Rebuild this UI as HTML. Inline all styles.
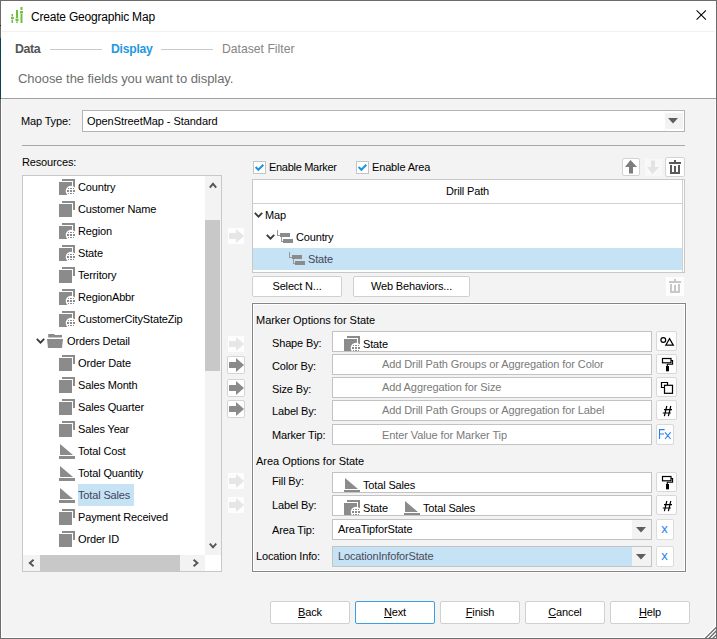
<!DOCTYPE html>
<html><head><meta charset="utf-8">
<style>
*{margin:0;padding:0;box-sizing:border-box}
html,body{width:717px;height:639px;overflow:hidden;background:#fff}
body{position:relative;font-family:"Liberation Sans",sans-serif;font-size:11px;color:#000}
.a{position:absolute}
.t{position:absolute;white-space:nowrap;line-height:13px;font-size:11px;letter-spacing:-0.15px}
.win{position:absolute;left:0;top:0;width:717px;height:639px;border:1px solid #6b6b6b;background:#fff}
.body{position:absolute;left:2px;top:99px;width:713px;height:538px;background:#f3f3f3}
.box{position:absolute;background:#fff;border:1px solid #c3c3c3}
.btn{position:absolute;background:#fff;border:1px solid #d0d0d0;border-radius:2px;text-align:center}
.ibtn{position:absolute;background:#fdfdfd;border:1px solid #d8d8d8;border-radius:2px}
.ph{color:#7a7a7a;letter-spacing:-0.1px}
svg{position:absolute;overflow:visible}
</style></head><body>
<svg width="0" height="0" style="position:absolute">
<defs>
<symbol id="dim" viewBox="0 0 16 16"><rect x="3" y="0" width="13" height="2" fill="#8b8b8b"/><rect x="14" y="0" width="2" height="9" fill="#8b8b8b"/><rect x="0" y="3" width="13" height="13" fill="#8b8b8b"/></symbol>
<symbol id="geo" viewBox="0 0 16 16"><rect x="3" y="0" width="13" height="2" fill="#8b8b8b"/><rect x="14" y="0" width="2" height="9" fill="#8b8b8b"/><rect x="0" y="3" width="13" height="13" fill="#8b8b8b"/><circle cx="12" cy="12" r="5.3" fill="#fff"/><g fill="#8b8b8b"><rect x="9" y="9" width="1" height="1"/><rect x="11" y="9" width="2" height="1"/><rect x="14" y="9" width="1" height="1"/><rect x="8" y="11" width="2" height="2"/><rect x="11" y="11" width="2" height="2"/><rect x="14" y="11" width="2" height="2"/><rect x="9" y="14" width="1" height="1"/><rect x="11" y="14" width="2" height="1"/><rect x="14" y="14" width="1" height="1"/></g></symbol>
<symbol id="mea" viewBox="0 0 16 16"><path d="M1 1 L1 12 L14 12 Z" fill="#8b8b8b"/><rect x="0" y="13" width="16" height="3" fill="#8b8b8b"/></symbol>
<symbol id="drl" viewBox="0 0 16 13"><rect x="0" y="0" width="1" height="6" fill="#9a9a9a"/><rect x="0" y="5" width="3" height="1" fill="#9a9a9a"/><rect x="3" y="3" width="10" height="4" fill="#8b8b8b"/><rect x="4" y="7" width="1" height="5" fill="#9a9a9a"/><rect x="4" y="11" width="2" height="1" fill="#9a9a9a"/><rect x="6" y="9" width="10" height="4" fill="#8b8b8b"/></symbol>
<symbol id="arr" viewBox="0 0 16 14"><path d="M1 4.5 Q1 4 1.5 4 L8 4 L8 0 L16 7 L8 14 L8 10 L1.5 10 Q1 10 1 9.5 Z"/></symbol>
<symbol id="chev" viewBox="0 0 9 6"><path d="M0.8 0.8 L4.5 4.6 L8.2 0.8" fill="none" stroke="#383838" stroke-width="1.8"/></symbol>
<symbol id="trash" viewBox="0 0 20 20"><rect x="9" y="3" width="2" height="2"/><rect x="4" y="5" width="12" height="2"/><rect x="5" y="8" width="2" height="9"/><rect x="9" y="9" width="2" height="8"/><rect x="13" y="8" width="2" height="9"/><rect x="5" y="15" width="10" height="2"/></symbol>
</defs></svg>

<div class="win"></div>
<div class="a" style="left:0;top:38px;width:1px;height:61px;background:#0b4450"></div>
<div class="a" style="left:0;top:25px;width:1px;height:1px;background:#222"></div>
<!-- header -->
<div class="a" style="left:2px;top:31px;width:713px;height:1px;background:#f1f1f1"></div>
<svg style="left:6px;top:4px" width="20" height="20" viewBox="0 0 20 20">
 <g fill="#70c040"><rect x="5.5" y="10" width="1.6" height="2.5"/><rect x="5" y="13" width="2.8" height="2"/><rect x="5.5" y="15.5" width="1.6" height="3.5"/>
 <rect x="10" y="6" width="2" height="8"/><rect x="9.5" y="14.5" width="3" height="2.5"/><rect x="10" y="17.5" width="2" height="1.2"/>
 <rect x="14.5" y="3" width="2" height="3"/><rect x="14" y="7" width="3" height="2.5"/><rect x="14.5" y="10" width="2" height="9"/></g>
</svg>
<div class="t" style="left:31px;top:11px;font-size:12px;letter-spacing:-0.2px">Create Geographic Map</div>
<svg style="left:696px;top:10px" width="11" height="10" viewBox="0 0 11 10"><path d="M0.6 0.3 L9.9 9.6 M9.9 0.3 L0.6 9.6" stroke="#000" stroke-width="1.05"/></svg>

<div class="t" style="left:15px;top:43px;font-size:12.4px;font-weight:bold;color:#555;letter-spacing:-0.4px">Data</div>
<div class="a" style="left:50px;top:49px;width:52px;height:1px;background:#c8c8c8"></div>
<div class="t" style="left:111px;top:43px;font-size:12.2px;font-weight:bold;color:#1f98e0;letter-spacing:-0.25px">Display</div>
<div class="a" style="left:161px;top:49px;width:52px;height:1px;background:#c8c8c8"></div>
<div class="t" style="left:222px;top:43px;font-size:12.2px;color:#858585;letter-spacing:0">Dataset Filter</div>
<div class="t" style="left:18px;top:71px;font-size:13px;line-height:15px;color:#6e6e6e;letter-spacing:-0.05px">Choose the fields you want to display.</div>
<div class="a" style="left:1px;top:98px;width:715px;height:1px;background:#a0a0a0"></div>

<div class="body"></div>

<div class="t" style="left:21px;top:115px">Map Type:</div>
<div class="box" style="left:82px;top:110px;width:603px;height:22px;border-color:#b4b4b4"></div>
<div class="t" style="left:87px;top:115px;letter-spacing:-0.06px">OpenStreetMap - Standard</div>
<div class="a" style="left:665px;top:111px;width:1px;height:20px;background:#f4f4f4"></div><div class="a" style="left:666px;top:113px;width:17px;height:16px;background:#f2f2f2"></div>
<svg style="left:668px;top:118px" width="10" height="6" viewBox="0 0 10 6"><path d="M0 0 L10 0 L5 5.5 Z" fill="#5e5e5e"/></svg>
<div class="a" style="left:22px;top:145px;width:663px;height:1px;background:#a8a8a8"></div>

<div class="t" style="left:22px;top:156px">Resources:</div>


<!-- resources list -->
<div class="box" style="left:22px;top:175px;width:200px;height:397px;border-color:#c8c8c8"></div>
<svg style="left:59px;top:179px" width="16" height="16"><use href="#geo"/></svg>
<div class="t" style="left:78px;top:181px">Country</div>
<svg style="left:59px;top:201px" width="16" height="16"><use href="#dim"/></svg>
<div class="t" style="left:78px;top:203px">Customer Name</div>
<svg style="left:59px;top:223px" width="16" height="16"><use href="#geo"/></svg>
<div class="t" style="left:78px;top:225px">Region</div>
<svg style="left:59px;top:245px" width="16" height="16"><use href="#geo"/></svg>
<div class="t" style="left:78px;top:247px">State</div>
<svg style="left:59px;top:267px" width="16" height="16"><use href="#dim"/></svg>
<div class="t" style="left:78px;top:269px">Territory</div>
<svg style="left:59px;top:289px" width="16" height="16"><use href="#geo"/></svg>
<div class="t" style="left:78px;top:291px">RegionAbbr</div>
<svg style="left:59px;top:311px" width="16" height="16"><use href="#geo"/></svg>
<div class="t" style="left:78px;top:313px">CustomerCityStateZip</div>
<svg style="left:36px;top:338px" width="9" height="6" viewBox="0 0 9 6"><use href="#chev"/></svg>
<svg style="left:47px;top:334px" width="16" height="14" viewBox="0 0 16 14"><path d="M1.2 0 L7 0 L8 1 L15 1 L15 3.5 L1.2 3.5 Z" fill="#8b8b8b"/><path d="M0 5 L16 5 L15 14 L1 14 Z" fill="#8b8b8b"/></svg>
<div class="t" style="left:67px;top:335px">Orders Detail</div>
<svg style="left:59px;top:355px" width="16" height="16"><use href="#dim"/></svg>
<div class="t" style="left:78px;top:357px">Order Date</div>
<svg style="left:59px;top:377px" width="16" height="16"><use href="#dim"/></svg>
<div class="t" style="left:78px;top:379px">Sales Month</div>
<svg style="left:59px;top:399px" width="16" height="16"><use href="#dim"/></svg>
<div class="t" style="left:78px;top:401px">Sales Quarter</div>
<svg style="left:59px;top:421px" width="16" height="16"><use href="#dim"/></svg>
<div class="t" style="left:78px;top:423px">Sales Year</div>
<svg style="left:59px;top:443px" width="16" height="16"><use href="#mea"/></svg>
<div class="t" style="left:78px;top:445px">Total Cost</div>
<svg style="left:59px;top:465px" width="16" height="16"><use href="#mea"/></svg>
<div class="t" style="left:78px;top:467px">Total Quantity</div>
<svg style="left:59px;top:487px" width="16" height="16"><use href="#mea"/></svg>
<div class="a" style="left:78px;top:484px;width:56px;height:22px;background:#c5e3f5"></div>
<div class="t" style="left:78px;top:489px;color:#44445a">Total Sales</div>
<svg style="left:59px;top:509px" width="16" height="16"><use href="#dim"/></svg>
<div class="t" style="left:78px;top:511px">Payment Received</div>
<svg style="left:59px;top:531px" width="16" height="16"><use href="#dim"/></svg>
<div class="t" style="left:78px;top:533px">Order ID</div>
<div class="a" style="left:205px;top:176px;width:16px;height:379px;background:#f3f3f3"></div>
<div class="a" style="left:205px;top:220px;width:15px;height:151px;background:#c8c8c8"></div>
<svg style="left:209px;top:182px" width="8" height="7" viewBox="0 0 8 7"><path d="M0.8 5.6 L4 1.8 L7.2 5.6" fill="none" stroke="#555" stroke-width="1.9"/></svg>
<svg style="left:209px;top:543px" width="8" height="7" viewBox="0 0 8 7"><path d="M0.8 0.6 L4 4.4 L7.2 0.6" fill="none" stroke="#555" stroke-width="1.9"/></svg>
<div class="a" style="left:23px;top:555px;width:182px;height:16px;background:#f3f3f3"></div>
<div class="a" style="left:40px;top:555px;width:140px;height:16px;background:#c8c8c8"></div>
<svg style="left:28px;top:559px" width="7" height="8" viewBox="0 0 7 8"><path d="M5.6 0.8 L1.8 4 L5.6 7.2" fill="none" stroke="#555" stroke-width="1.9"/></svg>
<svg style="left:193px;top:559px" width="7" height="8" viewBox="0 0 7 8"><path d="M0.6 0.8 L4.4 4 L0.6 7.2" fill="none" stroke="#555" stroke-width="1.9"/></svg>

<!-- transfer arrows -->
<div class="a" style="left:228px;top:228px;width:16px;height:16px;background:#fdfdfd"></div>
<svg style="left:228px;top:229px" width="16" height="14" fill="#e6e6e6"><use href="#arr"/></svg>
<div class="a" style="left:228px;top:336px;width:16px;height:16px;background:#fdfdfd"></div>
<svg style="left:228px;top:337px" width="16" height="14" fill="#e6e6e6"><use href="#arr"/></svg>
<div class="btn" style="left:227px;top:356px;width:18px;height:18px;border-color:#d4d4d4"></div>
<svg style="left:228px;top:358px" width="16" height="14" fill="#8a8a8a"><use href="#arr"/></svg>
<div class="btn" style="left:227px;top:379px;width:18px;height:18px;border-color:#d4d4d4"></div>
<svg style="left:228px;top:381px" width="16" height="14" fill="#8a8a8a"><use href="#arr"/></svg>
<div class="btn" style="left:227px;top:400px;width:18px;height:18px;border-color:#d4d4d4"></div>
<svg style="left:228px;top:402px" width="16" height="14" fill="#8a8a8a"><use href="#arr"/></svg>
<div class="a" style="left:228px;top:473px;width:16px;height:16px;background:#fdfdfd"></div>
<svg style="left:228px;top:474px" width="16" height="14" fill="#e6e6e6"><use href="#arr"/></svg>
<div class="a" style="left:228px;top:497px;width:16px;height:16px;background:#fdfdfd"></div>
<svg style="left:228px;top:498px" width="16" height="14" fill="#e6e6e6"><use href="#arr"/></svg>

<!-- checkboxes -->
<div class="box" style="left:253px;top:161px;width:13px;height:13px;border-color:#c4c4c4"></div>
<svg style="left:253px;top:161px" width="13" height="13" viewBox="0 0 13 13"><path d="M2.6 6 L5.4 8.8 L10.3 3.7" fill="none" stroke="#1b95dd" stroke-width="2"/></svg>
<div class="t" style="left:269px;top:161px;letter-spacing:-0.3px">Enable Marker</div>
<div class="box" style="left:356px;top:161px;width:13px;height:13px;border-color:#c4c4c4"></div>
<svg style="left:356px;top:161px" width="13" height="13" viewBox="0 0 13 13"><path d="M2.6 6 L5.4 8.8 L10.3 3.7" fill="none" stroke="#1b95dd" stroke-width="2"/></svg>
<div class="t" style="left:372px;top:161px">Enable Area</div>

<!-- up/down/trash -->
<div class="btn" style="left:622px;top:158px;width:18px;height:18px;border-color:#d4d4d4"></div>
<svg style="left:624px;top:160px" width="14" height="14" viewBox="0 0 14 14"><path d="M6.5 0 L13 7 L9 7 L9 13.5 L5 13.5 L5 7 L1 7 Z" fill="#7d7d7d"/></svg>
<div class="a" style="left:645px;top:159px;width:17px;height:17px;background:#f8f8f8"></div>
<svg style="left:646px;top:160px" width="14" height="14" viewBox="0 0 14 14"><path d="M6.5 14 L13 7 L9 7 L9 0.5 L5 0.5 L5 7 L1 7 Z" fill="#e3e3e3"/></svg>
<div class="btn" style="left:665px;top:157px;width:20px;height:20px;border-color:#d4d4d4"></div>
<svg style="left:665px;top:157px" width="20" height="20" viewBox="0 0 20 20"><use href="#trash" fill="#5a5a5a"/></svg>

<!-- drill table -->
<div class="box" style="left:252px;top:179px;width:433px;height:94px;border-color:#c8c8c8"></div>
<div class="a" style="left:253px;top:203px;width:430px;height:1px;background:#d0d0d0"></div>
<div class="a" style="left:682px;top:180px;width:1px;height:92px;background:#d0d0d0"></div>
<div class="t" style="left:253px;top:185px;width:429px;text-align:center">Drill Path</div>
<svg style="left:254px;top:212px" width="9" height="6" viewBox="0 0 9 6"><use href="#chev"/></svg>
<div class="t" style="left:265px;top:209px">Map</div>
<svg style="left:266px;top:234px" width="9" height="6" viewBox="0 0 9 6"><use href="#chev"/></svg>
<svg style="left:277px;top:230px" width="16" height="13"><use href="#drl"/></svg>
<div class="t" style="left:296px;top:231px">Country</div>
<div class="a" style="left:253px;top:248px;width:429px;height:22px;background:#c5e3f5"></div>
<svg style="left:289px;top:252px" width="16" height="13"><use href="#drl"/></svg>
<div class="t" style="left:308px;top:253px;color:#44445a">State</div>

<div class="a" style="left:666px;top:277px;width:18px;height:19px;background:#fdfdfd"></div>
<svg style="left:665px;top:276px" width="20" height="20" viewBox="0 0 20 20"><use href="#trash" fill="#c8c8c8"/></svg>

<div class="btn" style="left:252px;top:276px;width:90px;height:21px"></div>
<div class="t" style="left:252px;top:280px;width:90px;text-align:center">Select N...</div>
<div class="btn" style="left:353px;top:276px;width:117px;height:21px"></div>
<div class="t" style="left:353px;top:280px;width:117px;text-align:center">Web Behaviors...</div>


<!-- group box -->
<div class="a" style="left:252px;top:303px;width:434px;height:269px;border:1px solid #858585;box-shadow:inset 0 0 0 1px #fff,0 0 0 1px #fbfbfb"></div>
<div class="t" style="left:256px;top:314px;letter-spacing:-0.03px">Marker Options for State</div>
<div class="t" style="left:272px;top:337px">Shape By:</div>
<div class="t" style="left:272px;top:360px">Color By:</div>
<div class="t" style="left:272px;top:383px">Size By:</div>
<div class="t" style="left:272px;top:405px">Label By:</div>
<div class="t" style="left:272px;top:429px">Marker Tip:</div>
<div class="box" style="left:332px;top:331px;width:320px;height:21px;border-color:#c3c3c3"></div><div class="box" style="left:332px;top:354px;width:320px;height:21px;border-color:#c3c3c3"></div><div class="box" style="left:332px;top:377px;width:320px;height:21px;border-color:#c3c3c3"></div><div class="box" style="left:332px;top:400px;width:320px;height:21px;border-color:#c3c3c3"></div><div class="box" style="left:332px;top:424px;width:320px;height:21px;border-color:#c3c3c3"></div>
<div class="a" style="left:333px;top:332px;width:318px;height:19px;overflow:hidden">
 <svg style="left:11px;top:4px" width="16" height="16"><use href="#geo"/></svg>
 <div class="t" style="left:30px;top:6px">State</div>
</div>
<div class="t ph" style="left:382px;top:358px">Add Drill Path Groups or Aggregation for Color</div>
<div class="t ph" style="left:382px;top:381px">Add Aggregation for Size</div>
<div class="t ph" style="left:382px;top:404px">Add Drill Path Groups or Aggregation for Label</div>
<div class="t ph" style="left:382px;top:429px">Enter Value for Marker Tip</div>
<div class="ibtn" style="left:656px;top:331px;width:21px;height:20px"></div><div class="ibtn" style="left:656px;top:354px;width:21px;height:20px"></div><div class="ibtn" style="left:656px;top:377px;width:21px;height:20px"></div><div class="ibtn" style="left:656px;top:400px;width:21px;height:20px"></div><div class="ibtn" style="left:656px;top:424px;width:18px;height:21px"></div>
<svg style="left:657px;top:331px" width="20" height="20" viewBox="0 0 20 20"><circle cx="6.3" cy="9" r="2.4" fill="none" stroke="#000" stroke-width="1.2"/><path d="M12.5 7.6 L16.3 14.2 L8.8 14.2 Z" fill="none" stroke="#000" stroke-width="1.2"/></svg>
<svg style="left:657px;top:354px" width="20" height="20" viewBox="0 0 20 20"><rect x="5.5" y="4.5" width="8.5" height="4.3" fill="none" stroke="#000" stroke-width="1.2"/><path d="M14 6.5 L15.6 6.5 L15.6 10.2 L10.3 10.2 L10.3 12" fill="none" stroke="#000" stroke-width="1.1"/><rect x="9" y="12" width="3" height="5.3" fill="#000"/></svg>
<svg style="left:657px;top:377px" width="20" height="20" viewBox="0 0 20 20"><path d="M7.5 10.5 L4.5 10.5 L4.5 5.5 L10.5 5.5 L10.5 8" fill="none" stroke="#000" stroke-width="1.2"/><rect x="7.5" y="8.3" width="8" height="8" fill="none" stroke="#000" stroke-width="1.2"/></svg>
<svg style="left:657px;top:400px" width="20" height="20" viewBox="0 0 20 20"><path d="M9.8 6 L7.4 16.2 M13.8 6 L11.4 16.2 M7 9.6 L15 9.6 M5.8 13 L13.8 13" stroke="#000" stroke-width="1.2" fill="none"/></svg>
<svg style="left:656px;top:424px" width="18" height="21" viewBox="0 0 18 21"><path d="M3.5 15 L3.5 5.6 L8.6 5.6 M3.5 10 L8 10 M9 8.3 L14.6 15 M14.6 8.3 L9 15" stroke="#2a80ee" stroke-width="1.1" fill="none"/></svg>

<div class="t" style="left:256px;top:455px;letter-spacing:-0.03px">Area Options for State</div>
<div class="t" style="left:272px;top:475px">Fill By:</div>
<div class="t" style="left:272px;top:499px">Label By:</div>
<div class="t" style="left:272px;top:524px">Area Tip:</div>
<div class="t" style="left:256px;top:550px">Location Info:</div>
<div class="box" style="left:332px;top:472px;width:320px;height:21px;border-color:#c3c3c3"></div><div class="box" style="left:332px;top:495px;width:320px;height:21px;border-color:#c3c3c3"></div><div class="box" style="left:332px;top:519px;width:320px;height:21px;border-color:#c3c3c3"></div><div class="box" style="left:332px;top:546px;width:320px;height:21px;border-color:#c3c3c3"></div>
<div class="a" style="left:333px;top:473px;width:318px;height:19px;overflow:hidden">
 <svg style="left:11px;top:4px" width="16" height="16"><use href="#mea"/></svg>
 <div class="t" style="left:30px;top:6px">Total Sales</div>
</div>
<div class="a" style="left:333px;top:496px;width:318px;height:19px;overflow:hidden">
 <svg style="left:11px;top:4px" width="16" height="16"><use href="#geo"/></svg>
 <div class="t" style="left:30px;top:6px">State</div>
 <svg style="left:71px;top:4px" width="16" height="16"><use href="#mea"/></svg>
 <div class="t" style="left:90px;top:6px">Total Sales</div>
</div>
<div class="t" style="left:338px;top:523px">AreaTipforState</div>
<div class="a" style="left:632px;top:520px;width:19px;height:19px;background:#f3f3f3"></div>
<svg style="left:636px;top:527px" width="10" height="6" viewBox="0 0 10 6"><path d="M0 0 L10 0 L5 5.5 Z" fill="#5e5e5e"/></svg>
<div class="a" style="left:333px;top:547px;width:299px;height:19px;background:#c5e3f5"></div>
<div class="t" style="left:338px;top:550px;color:#4a4a5a">LocationInfoforState</div>
<div class="a" style="left:632px;top:547px;width:19px;height:19px;background:#f3f3f3"></div>
<svg style="left:636px;top:554px" width="10" height="6" viewBox="0 0 10 6"><path d="M0 0 L10 0 L5 5.5 Z" fill="#5e5e5e"/></svg>
<div class="ibtn" style="left:656px;top:472px;width:21px;height:20px"></div><div class="ibtn" style="left:656px;top:495px;width:21px;height:20px"></div>
<svg style="left:657px;top:472px" width="20" height="20" viewBox="0 0 20 20"><rect x="5.5" y="4.5" width="8.5" height="4.3" fill="none" stroke="#000" stroke-width="1.2"/><path d="M14 6.5 L15.6 6.5 L15.6 10.2 L10.3 10.2 L10.3 12" fill="none" stroke="#000" stroke-width="1.1"/><rect x="9" y="12" width="3" height="5.3" fill="#000"/></svg>
<svg style="left:657px;top:495px" width="20" height="20" viewBox="0 0 20 20"><path d="M9.8 6 L7.4 16.2 M13.8 6 L11.4 16.2 M7 9.6 L15 9.6 M5.8 13 L13.8 13" stroke="#000" stroke-width="1.2" fill="none"/></svg>
<div class="btn" style="left:656px;top:519px;width:18px;height:21px;border-color:#dcdcdc"></div>
<div class="t" style="left:656px;top:522px;width:18px;text-align:center;font-size:13px;color:#1f7ff0;text-indent:-1px">x</div>
<div class="btn" style="left:656px;top:546px;width:18px;height:21px;border-color:#dcdcdc"></div>
<div class="t" style="left:656px;top:549px;width:18px;text-align:center;font-size:13px;color:#1f7ff0;text-indent:-1px">x</div>

<!-- bottom buttons -->
<div class="btn" style="left:270px;top:601px;width:80px;height:23px"></div>
<div class="t" style="left:270px;top:606px;width:80px;text-align:center"><u>B</u>ack</div>
<div class="btn" style="left:355px;top:601px;width:80px;height:23px;border-color:#3c9ee0"></div>
<div class="t" style="left:355px;top:606px;width:80px;text-align:center"><u>N</u>ext</div>
<div class="btn" style="left:440px;top:601px;width:80px;height:23px"></div>
<div class="t" style="left:440px;top:606px;width:80px;text-align:center"><u>F</u>inish</div>
<div class="btn" style="left:525px;top:601px;width:80px;height:23px"></div>
<div class="t" style="left:525px;top:606px;width:80px;text-align:center"><u>C</u>ancel</div>
<div class="btn" style="left:610px;top:601px;width:80px;height:23px"></div>
<div class="t" style="left:610px;top:606px;width:80px;text-align:center"><u>H</u>elp</div>
<svg style="left:700px;top:622px;overflow:hidden" width="16" height="16" viewBox="0 0 16 16"><path d="M20.4 0 L16 0 L16 16 L4.4 16 Z" fill="#6b6b6b"/><path d="M19.6 0 L0 19.6 M23.4 0 L0 23.4 M27.2 0 L0 27.2 M31 0 L0 31" stroke="#fff" stroke-width="1.35"/></svg>

</body></html>
